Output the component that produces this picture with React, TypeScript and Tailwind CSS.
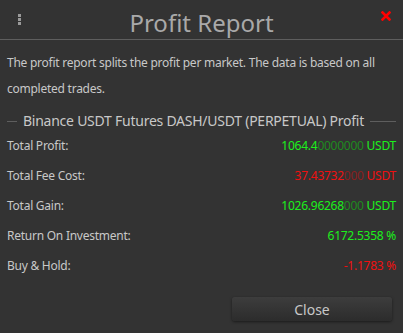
const rows = [
  { label: "Total Profit:", main: "1064.4", dim: "0000000", unit: " USDT", tone: "green" },
  { label: "Total Fee Cost:", main: "37.43732", dim: "000", unit: " USDT", tone: "red" },
  { label: "Total Gain:", main: "1026.96268", dim: "000", unit: " USDT", tone: "green" },
  { label: "Return On Investment:", main: "6172.5358 %", dim: "", unit: "", tone: "green" },
  { label: "Buy & Hold:", main: "-1.1783 %", dim: "", unit: "", tone: "red" },
];

function Value({ main, dim, unit, tone }: { main: string; dim: string; unit: string; tone: string }) {
  const bright = tone === "green" ? "text-[#1cf01c]" : "text-[#f01010]";
  const faded = tone === "green" ? "text-[#1f8a1f]" : "text-[#8a1f1f]";
  return (
    <span className="whitespace-pre">
      <span className={bright}>{main}</span>
      <span className={faded}>{dim}</span>
      <span className={bright}>{unit}</span>
    </span>
  );
}

export default function App() {
  return (
    <div
      className="flex h-[333px] w-[403px] flex-col overflow-hidden bg-[#333333] text-[#c8c8c8] tracking-[-0.25px]"
      style={{ fontFamily: '"Noto Sans", sans-serif' }}
    >
      <header className="relative flex h-[40px] items-center justify-center border-b border-[#5e5e5e] pt-[6px]">
        <div className="absolute left-[18px] top-[14px] flex flex-col gap-[1px]">
          <span className="h-[3px] w-[3px] bg-[#9a9a9a]" />
          <span className="h-[3px] w-[3px] bg-[#9a9a9a]" />
          <span className="h-[3px] w-[3px] bg-[#9a9a9a]" />
        </div>
        <h1 className="text-[24px] leading-none tracking-normal text-[#a9a9a9]">Profit Report</h1>
        <svg className="absolute right-[12px] top-[11px]" width="10" height="10" viewBox="0 0 10 10">
          <path d="M1.5 1.5 L8.5 8.5 M8.5 1.5 L1.5 8.5" stroke="#ff0000" strokeWidth="2.6" strokeLinecap="square" />
        </svg>
      </header>

      <p className="px-[7px] pt-[10px] text-[12px] leading-[26px]">
        The profit report splits the profit per market. The data is based on all completed trades.
      </p>

      <div className="mt-[10px] flex items-center gap-[6px] px-[7px]">
        <span className="h-px w-[10px] bg-[#5e5e5e]" />
        <span className="text-[14px] leading-[18px]">Binance USDT Futures DASH/USDT (PERPETUAL) Profit</span>
        <span className="h-px flex-1 bg-[#5e5e5e]" />
      </div>

      <div className="mt-px flex flex-col px-[7px] text-[12px]">
        {rows.map((r) => (
          <div key={r.label} className="flex h-[30px] items-center justify-between">
            <span>{r.label}</span>
            <Value main={r.main} dim={r.dim} unit={r.unit} tone={r.tone} />
          </div>
        ))}
      </div>

      <div className="mt-auto flex justify-end px-[11px] pb-[12px]">
        <button className="h-[24px] w-[160px] rounded-[3px] bg-gradient-to-b from-[#3d3d3d] to-[#2c2c2c] text-[14px] tracking-normal text-[#c8c8c8] shadow-[0_1px_3px_rgba(0,0,0,0.5)]">
          Close
        </button>
      </div>
    </div>
  );
}
